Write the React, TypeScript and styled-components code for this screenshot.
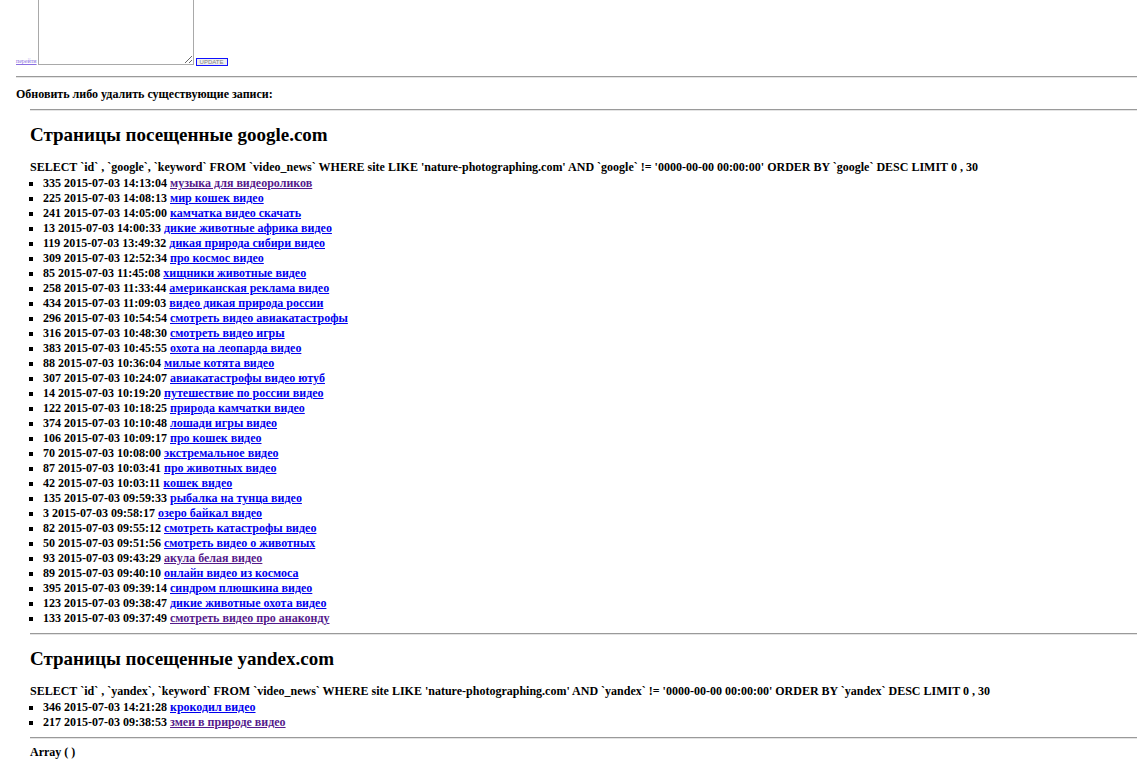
import React from 'react';
import styled, { createGlobalStyle } from 'styled-components';

const GlobalStyle = createGlobalStyle`
    html, body {
        margin: 0;
        padding: 0;
        background: #ffffff;
        overflow-x: hidden;
    }
    body {
        font-family: "Liberation Serif", "Times New Roman", serif;
        font-weight: bold;
        font-size: 12px;
        color: #000000;
    }
`;

const Page = styled.div`
    margin-top: -42px;
    padding-left: 16px;
`;

const FormRow = styled.div`
    display: flex;
    align-items: flex-end;
    height: 107px;
`;

const GoLink = styled.a`
    font-size: 6px;
    font-weight: normal;
    color: #8a6fe0;
    text-decoration: underline;
    margin-bottom: 1px;
    margin-right: 1px;
`;

const Area = styled.textarea`
    width: 150px;
    height: 100px;
    border: 1px solid #a9a9a9;
    padding: 2px;
    margin: 0;
    resize: both;
    display: block;
`;

const UpdateButton = styled.button`
    font-size: 6px;
    font-weight: normal;
    font-family: "Liberation Sans", Arial, sans-serif;
    color: #808080;
    background: #efefef;
    border: 1px solid #1010ff;
    padding: 0 3px;
    height: 8px;
    line-height: 6px;
    margin-left: 2px;
    margin-bottom: -1px;
`;

const Rule = styled.hr<{ $top: number }>`
    margin: ${p => p.$top}px 0 0 0;
    border: 0;
    border-top: 1px solid #9a9a9a;
    border-bottom: 1px solid #e4e4e4;
    height: 0;
`;

const Caption = styled.div`
    margin-top: 9px;
    line-height: 15px;
`;

const Quote = styled.div`
    margin-top: 7px;
    padding-left: 14px;
`;

const Heading = styled.h2`
    font-size: 19px;
    line-height: 22px;
    margin: 13px 0 14px 0;
`;

const Query = styled.div`
    line-height: 15px;
    white-space: nowrap;
`;

const List = styled.ul`
    margin: 1px 0 7px 0;
    padding-left: 13px;
    list-style: square;
`;

const Item = styled.li`
    line-height: 15px;
    white-space: nowrap;
`;

const KeyLink = styled.a<{ $visited?: boolean }>`
    color: ${p => (p.$visited ? '#551a8b' : '#0000ee')};
    text-decoration: underline;
`;

const Footer = styled.div`
    margin-top: 6px;
    line-height: 15px;
`;

type Row = [string, string, string, boolean?];

const googleRows: Row[] = [
    ['335', '14:13:04', 'музыка для видеороликов', true],
    ['225', '14:08:13', 'мир кошек видео'],
    ['241', '14:05:00', 'камчатка видео скачать'],
    ['13', '14:00:33', 'дикие животные африка видео'],
    ['119', '13:49:32', 'дикая природа сибири видео'],
    ['309', '12:52:34', 'про космос видео'],
    ['85', '11:45:08', 'хищники животные видео'],
    ['258', '11:33:44', 'американская реклама видео'],
    ['434', '11:09:03', 'видео дикая природа россии'],
    ['296', '10:54:54', 'смотреть видео авиакатастрофы'],
    ['316', '10:48:30', 'смотреть видео игры'],
    ['383', '10:45:55', 'охота на леопарда видео'],
    ['88', '10:36:04', 'милые котята видео'],
    ['307', '10:24:07', 'авиакатастрофы видео ютуб'],
    ['14', '10:19:20', 'путешествие по россии видео'],
    ['122', '10:18:25', 'природа камчатки видео'],
    ['374', '10:10:48', 'лошади игры видео'],
    ['106', '10:09:17', 'про кошек видео'],
    ['70', '10:08:00', 'экстремальное видео'],
    ['87', '10:03:41', 'про животных видео'],
    ['42', '10:03:11', 'кошек видео'],
    ['135', '09:59:33', 'рыбалка на тунца видео'],
    ['3', '09:58:17', 'озеро байкал видео'],
    ['82', '09:55:12', 'смотреть катастрофы видео'],
    ['50', '09:51:56', 'смотреть видео о животных'],
    ['93', '09:43:29', 'акула белая видео', true],
    ['89', '09:40:10', 'онлайн видео из космоса'],
    ['395', '09:39:14', 'синдром плюшкина видео'],
    ['123', '09:38:47', 'дикие животные охота видео'],
    ['133', '09:37:49', 'смотреть видео про анаконду', true],
];

const yandexRows: Row[] = [
    ['346', '14:21:28', 'крокодил видео'],
    ['217', '09:38:53', 'змеи в природе видео', true],
];

const Section = (props: { engine: string; rows: Row[] }) => (
    <>
        <Heading>Страницы посещенные {props.engine}.com</Heading>
        <Query>
            SELECT `id` , `{props.engine}`, `keyword` FROM `video_news` WHERE site LIKE 'nature-photographing.com' AND `{props.engine}` != '0000-00-00 00:00:00' ORDER BY `{props.engine}` DESC LIMIT 0 , 30
        </Query>
        <List>
            {props.rows.map(([id, time, word, visited]) => (
                <Item key={id}>
                    {id} 2015-07-03 {time} <KeyLink href="#" $visited={visited}>{word}</KeyLink>
                </Item>
            ))}
        </List>
    </>
);

const App = () => (
    <>
        <GlobalStyle />
        <Page>
            <FormRow>
                <GoLink href="#">перейти</GoLink>
                <Area />
                <UpdateButton>UPDATE</UpdateButton>
            </FormRow>
            <Rule $top={11} />
            <Caption>Обновить либо удалить существующие записи:</Caption>
            <Quote>
                <Rule $top={0} />
                <Section engine="google" rows={googleRows} />
                <Rule $top={0} />
                <Section engine="yandex" rows={yandexRows} />
                <Rule $top={0} />
                <Footer>Array ( )</Footer>
            </Quote>
        </Page>
    </>
);

export default App;
